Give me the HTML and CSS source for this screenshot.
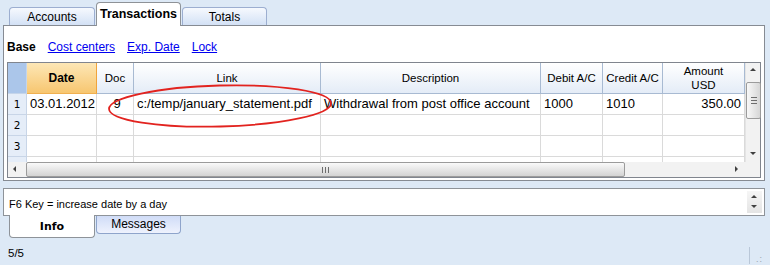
FILE: index.html
```html
<!DOCTYPE html>
<html lang="en">
<head>
    <meta charset="UTF-8">
    <title>Transactions</title>
    <link rel="stylesheet" href="styles.css">
</head>
<body>

<!-- top tabs -->
<div class="top-tabs">
    <div class="tab">Accounts</div>
    <div class="tab active">Transactions</div>
    <div class="tab">Totals</div>
</div>

<div class="panel">
    <div class="views">
        <b>Base</b>
        <a href="#">Cost centers</a>
        <a href="#">Exp. Date</a>
        <a href="#">Lock</a>
    </div>

    <div class="grid">
        <div class="grid-body">
            <div class="table">
                <div class="hcell corner"></div>
                <div class="hcell sel"><b>Date</b></div>
                <div class="hcell">Doc</div>
                <div class="hcell">Link</div>
                <div class="hcell">Description</div>
                <div class="hcell">Debit A/C</div>
                <div class="hcell">Credit A/C</div>
                <div class="hcell">Amount<br>USD</div>

                <div class="rnum">1</div>
                <div class="cell">03.01.2012</div>
                <div class="cell center">9</div>
                <div class="cell">c:/temp/january_statement.pdf</div>
                <div class="cell">Withdrawal from post office account</div>
                <div class="cell">1000</div>
                <div class="cell">1010</div>
                <div class="cell right">350.00</div>

                <div class="rnum">2</div>
                <div class="cell"></div><div class="cell"></div><div class="cell"></div>
                <div class="cell"></div><div class="cell"></div><div class="cell"></div><div class="cell"></div>

                <div class="rnum">3</div>
                <div class="cell"></div><div class="cell"></div><div class="cell"></div>
                <div class="cell"></div><div class="cell"></div><div class="cell"></div><div class="cell"></div>

                <div class="rnum"></div>
                <div class="cell"></div><div class="cell"></div><div class="cell"></div>
                <div class="cell"></div><div class="cell"></div><div class="cell"></div><div class="cell"></div>
            </div>

            <div class="vscroll">
                <span class="arrow up"></span>
                <div class="vthumb"><i></i><i></i><i></i></div>
                <span class="arrow down"></span>
            </div>
        </div>

        <div class="hscroll-row">
            <div class="hscroll">
                <span class="arrow left"></span>
                <div class="hthumb"><i></i><i></i><i></i></div>
                <span class="arrow right"></span>
            </div>
            <div class="corner-box"></div>
        </div>
    </div>

    <!-- red mark round the link -->
    <svg class="mark" width="240" height="50" viewBox="0 0 240 50">
        <ellipse cx="116" cy="22" rx="111" ry="20.5" fill="none" stroke="#e2231f" stroke-width="1.8" transform="rotate(-1.5 116 22)"/>
    </svg>
</div>

<!-- info box -->
<div class="info">
    <span class="info-text">F6 Key = increase date by a day</span>
    <div class="spin">
        <span class="arrow up"></span>
        <span class="arrow down"></span>
    </div>
</div>

<div class="bottom-tabs">
    <div class="btab active">Info</div>
    <div class="btab">Messages</div>
</div>

<div class="status">
    <span>5/5</span>
    <div class="grip">
        <span class="sep"></span>
        <span class="dots">.:</span>
    </div>
</div>

</body>
</html>
```

FILE: styles.css
```css
body {
    margin: 0;
    width: 770px;
    height: 265px;
    overflow: hidden;
    background-color: #dde9f6;
    font-family: 'Liberation Sans', Arial, sans-serif;
    font-size: 11px;
    color: #000;
}

/* top tabs */
.top-tabs {
    display: flex;
    align-items: flex-end;
    height: 25px;
    padding-left: 9px;
}

.tab {
    box-sizing: border-box;
    width: 86px;
    height: 18px;
    margin-right: 1px;
    border: 1px solid #9caed0;
    border-bottom: none;
    border-radius: 4px 4px 0 0;
    background: linear-gradient(#f6f9fe, #d3e1f5);
    font-size: 12px;
    text-align: center;
    line-height: 18px;
}

.tab.active {
    position: relative;
    z-index: 2;
    width: 85px;
    height: 24px;
    margin-bottom: -1px;
    border-color: #8e9297;
    background: #fff;
    font-weight: bold;
    font-size: 12.5px;
    line-height: 22px;
}

.tab.active + .tab {
    width: 85px;
}

/* main white panel */
.panel {
    position: relative;
    box-sizing: border-box;
    width: 762px;
    height: 156px;
    margin-left: 3px;
    padding: 0 3px 2px 3px;
    border: 1px solid #868b93;
    background: #fff;
}

.views {
    display: flex;
    gap: 12px;
    height: 36px;
    padding-top: 14px;
    box-sizing: border-box;
    font-size: 12px;
    line-height: 14px;
}

.views a {
    color: #0000f0;
}

.grid {
    box-sizing: border-box;
    height: 116px;
    border: 1px solid #80858e;
    display: flex;
    flex-direction: column;
}

.grid-body {
    display: flex;
    height: 99px;
}

.table {
    display: grid;
    grid-template-columns: 19px 70px 37px 187px 220px 62px 60px 82px;
    grid-template-rows: 31px 21px 21px 21px 21px;
    width: 737px;
    height: 99px;
    overflow: hidden;
}

.hcell {
    box-sizing: border-box;
    display: flex;
    align-items: center;
    justify-content: center;
    text-align: center;
    line-height: 14px;
    border-right: 1px solid #a8bad2;
    border-bottom: 1px solid #a8bad2;
    background: linear-gradient(#ffffff, #e4ecf7);
    font-size: 11.5px;
}

.hcell.corner {
    background: #abc6ea;
    border-color: #c5d5ea;
}

.hcell.sel {
    background: linear-gradient(#fde7b6, #f7c670);
    border-right-color: #f0a43c;
    border-bottom-color: #f0b050;
    font-size: 12px;
}

.rnum {
    box-sizing: border-box;
    background: #e5edf8;
    border-right: 1px solid #c8d5e7;
    border-bottom: 1px solid #c8d5e7;
    text-align: center;
    font-family: 'DejaVu Sans', sans-serif;
    font-size: 10.5px;
    line-height: 20px;
}

.cell {
    box-sizing: border-box;
    padding: 0 2px 0 3px;
    border-right: 1px solid #dadada;
    border-bottom: 1px solid #dadada;
    font-size: 13px;
    line-height: 20px;
    white-space: nowrap;
    overflow: hidden;
}

.cell.center {
    text-align: center;
    padding-left: 6px;
}

.cell.right {
    text-align: right;
    padding-right: 3px;
}

/* scrollbars */
.vscroll {
    position: relative;
    width: 15px;
    background: #f2f2f2;
    border-left: 1px solid #e4e4e4;
    box-sizing: border-box;
}

.arrow {
    position: absolute;
    width: 0;
    height: 0;
    border: 3px solid transparent;
}

.vscroll .arrow.up {
    top: 5px;
    left: 4px;
    border-bottom: 3px solid #404040;
    border-top: none;
}

.vscroll .arrow.down {
    bottom: 7px;
    left: 4px;
    border-top: 3px solid #404040;
    border-bottom: none;
}

.vthumb {
    position: absolute;
    top: 19px;
    left: 0;
    width: 13px;
    height: 35px;
    border: 1px solid #9b9b9b;
    border-radius: 2px;
    background: linear-gradient(90deg, #f8f8f8, #d6d6d6);
    display: flex;
    flex-direction: column;
    align-items: center;
    justify-content: center;
    gap: 2px;
}

.vthumb i {
    width: 6px;
    height: 1px;
    background: #6d6d6d;
}

.hscroll-row {
    display: flex;
    height: 15px;
}

.hscroll {
    position: relative;
    width: 737px;
    background: #f2f2f2;
}

.hscroll .arrow.left {
    top: 4px;
    left: 5px;
    border-right: 3px solid #404040;
    border-left: none;
}

.hscroll .arrow.right {
    top: 4px;
    left: 727px;
    border-left: 3px solid #404040;
    border-right: none;
}

.hthumb {
    position: absolute;
    top: 0;
    left: 18px;
    box-sizing: border-box;
    width: 599px;
    height: 15px;
    border: 1px solid #9b9b9b;
    border-radius: 2px;
    background: linear-gradient(#fafafa, #d3d3d3);
    display: flex;
    align-items: center;
    justify-content: center;
    gap: 2px;
}

.hthumb i {
    width: 1px;
    height: 6px;
    background: #6d6d6d;
}

.corner-box {
    width: 15px;
    background: #f2f2f2;
}

.mark {
    position: absolute;
    left: 100px;
    top: 58px;
}

/* info box */
.info {
    position: relative;
    box-sizing: border-box;
    width: 762px;
    height: 28px;
    margin: 7px 0 0 3px;
    border: 1px solid #8e9399;
    background: #fff;
    display: flex;
    justify-content: space-between;
}

.info-text {
    padding: 8px 0 0 5px;
    font-size: 11px;
    line-height: 14px;
}

.spin {
    position: relative;
    width: 15px;
    margin: 2px 2px 2px 0;
    background: linear-gradient(#f6f6f6, #e4e4e4);
}

.spin .arrow.up {
    top: 4px;
    left: 4px;
    border-bottom: 3px solid #404040;
    border-top: none;
}

.spin .arrow.down {
    bottom: 5px;
    left: 4px;
    border-top: 3px solid #404040;
    border-bottom: none;
}

/* bottom tabs */
.bottom-tabs {
    display: flex;
    padding-left: 9px;
    height: 23px;
}

.btab {
    box-sizing: border-box;
    width: 85px;
    height: 18px;
    margin-right: 1px;
    border: 1px solid #8ea4cb;
    border-top: none;
    border-radius: 0 0 4px 4px;
    background: linear-gradient(#d0dcf7, #eef2fd);
    font-size: 12px;
    text-align: center;
    line-height: 16px;
}

.btab.active {
    position: relative;
    z-index: 2;
    width: 86px;
    height: 23px;
    margin-top: -1px;
    border-color: #8e9399;
    background: #fff;
    font-family: 'DejaVu Sans', sans-serif;
    font-weight: bold;
    font-size: 11px;
    line-height: 24px;
}

/* status line */
.status {
    display: flex;
    justify-content: space-between;
    align-items: center;
    height: 27px;
    padding: 0 7px 0 8px;
    font-size: 11.5px;
}

.grip {
    display: flex;
    align-items: flex-end;
    gap: 6px;
    height: 17px;
    margin-top: 6px;
}

.sep {
    width: 1px;
    height: 17px;
    background: #b9c7d8;
}

.dots {
    font-size: 9px;
    line-height: 9px;
    color: #9aa3ad;
    letter-spacing: 1px;
}
```
